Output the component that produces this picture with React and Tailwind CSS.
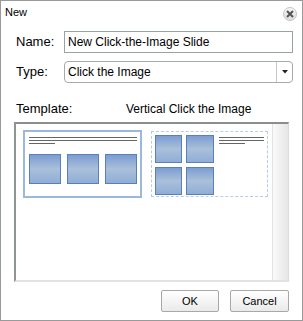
import React from "react";

const Tile = ({ className = "" }) => (
  <div
    className={
      "border border-[#5b80b8] bg-gradient-to-b from-[#7b9dd2] via-[#aac0da] to-[#8fadd6] " +
      className
    }
  />
);

const TextLines = ({ long, short }) => (
  <div className="flex flex-col gap-[2px]">
    <div className={`h-px bg-[#666] ${long}`} />
    <div className={`h-px bg-[#666] ${long}`} />
    <div className={`h-px bg-[#666] ${short}`} />
  </div>
);

export default function App() {
  return (
    <div
      className="w-[303px] h-[321px] border border-[#9a9a9a] bg-white flex flex-col text-black"
      style={{ fontFamily: '"Liberation Sans", Arial, sans-serif' }}
    >
      {/* Title */}
      <div className="h-[30px] flex justify-between pl-[4px] pr-[5px] pt-[3px]">
        <span className="text-[11px] leading-[16px]">New</span>
        <div className="mt-[3px] w-[14px] h-[14px] rounded-full border border-[#c4c4c4] bg-gradient-to-b from-[#f7f7f7] to-[#dedede] flex items-center justify-center">
          <svg width="8" height="8" viewBox="0 0 8 8">
            <path d="M1 1L7 7M7 1L1 7" stroke="#555" strokeWidth="2" />
          </svg>
        </div>
      </div>

      {/* Name */}
      <div className="flex items-center h-[22px] pl-[15px] text-[12px]">
        <span className="w-[48px] text-[13px]">Name:</span>
        <div className="w-[229px] h-[22px] border border-[#98a4a4] flex items-center pl-[3px] leading-none">
          New Click-the-Image Slide
        </div>
      </div>

      {/* Type */}
      <div className="flex items-center h-[22px] mt-[8px] pl-[15px] text-[12px]">
        <span className="w-[48px] text-[13px]">Type:</span>
        <div className="w-[229px] h-[22px] border border-[#a9a9a9] rounded-[4px] flex items-center">
          <span className="flex-1 pl-[3px] leading-none">Click the Image</span>
          <div className="w-[16px] h-full border-l border-[#c8c8c8] flex items-center justify-center">
            <svg width="6" height="4" viewBox="0 0 6 4">
              <path d="M0 0H6L3 3.5Z" fill="#222" />
            </svg>
          </div>
        </div>
      </div>

      {/* Template labels */}
      <div className="flex mt-[18px] pl-[15px] text-[12px] leading-[16px]">
        <span className="w-[110px] text-[13px]">Template:</span>
        <span>Vertical Click the Image</span>
      </div>

      {/* Template list */}
      <div className="ml-[13px] mt-[5px] w-[275px] h-[160px] flex border-t-2 border-l-2 border-t-[#8a8e8e] border-l-[#8f9494] border-r border-b-2 border-r-[#dcdcdc] border-b-[#dfe3e3]">
        <div className="flex-1 flex gap-[8px] pl-[7px] pt-[6px] items-start">
          {/* Selected template */}
          <div className="w-[119px] h-[68px] border-2 border-[#9bb9dc] pl-[4px] pt-[5px] flex flex-col">
            <TextLines long="w-[108px]" short="w-[26px]" />
            <div className="flex gap-[6px] mt-[10px]">
              <Tile className="w-[32px] h-[30px]" />
              <Tile className="w-[32px] h-[30px]" />
              <Tile className="w-[32px] h-[30px]" />
            </div>
          </div>
          {/* Vertical template */}
          <div className="w-[119px] h-[68px] p-px">
            <div className="w-full h-full border border-dashed border-[#b6cde8] flex pl-[3px] pt-[3px]">
              <div className="grid grid-cols-2 gap-[3px]">
                <Tile className="w-[27px] h-[28px]" />
                <Tile className="w-[28px] h-[28px]" />
                <Tile className="w-[27px] h-[28px]" />
                <Tile className="w-[28px] h-[28px]" />
              </div>
              <div className="ml-[5px] pt-[2px]">
                <TextLines long="w-[45px]" short="w-[26px]" />
              </div>
            </div>
          </div>
        </div>
        <div className="w-[16px] h-full border-l border-[#e2e2e2] bg-gradient-to-r from-[#fafafa] to-[#e6e6e6]" />
      </div>

      {/* Buttons */}
      <div className="flex justify-end gap-[11px] mt-[8px] pr-[13px] text-[11px]">
        <button className="w-[58px] h-[22px] border border-[#a8a8a8] rounded-[2px] bg-gradient-to-b from-white to-[#eaeaea]">
          OK
        </button>
        <button className="w-[59px] h-[22px] border border-[#a8a8a8] rounded-[2px] bg-gradient-to-b from-white to-[#eaeaea]">
          Cancel
        </button>
      </div>
    </div>
  );
}
